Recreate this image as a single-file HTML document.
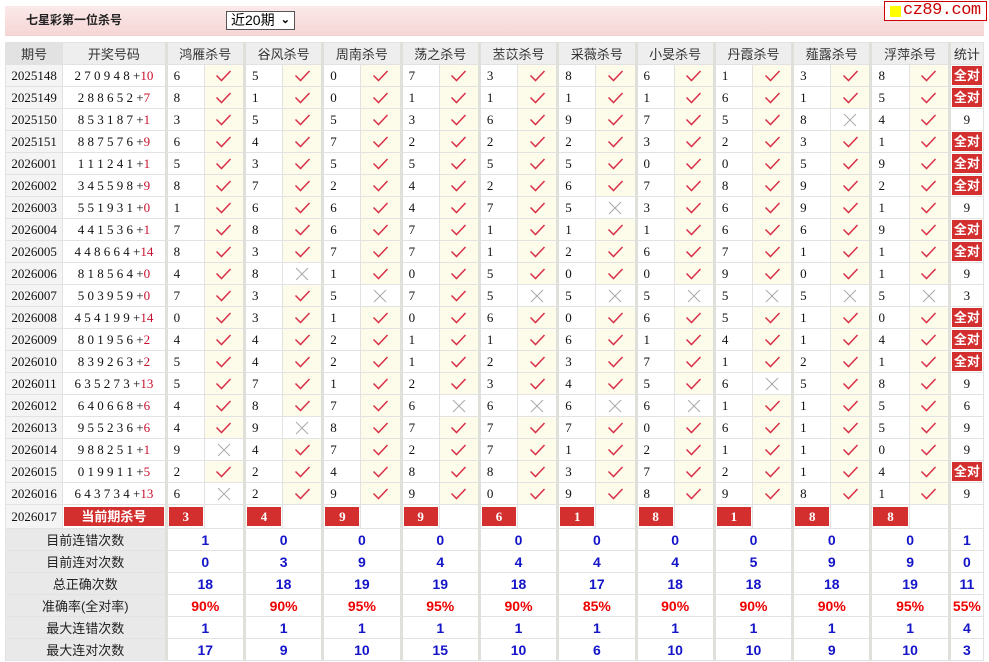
<!DOCTYPE html>
<html><head><meta charset="utf-8"><style>
body{margin:0;width:989px;height:662px;background:#fff;position:relative;overflow:hidden;font-family:"Liberation Serif","Noto Serif CJK SC",serif}
.bar{position:absolute;left:5px;top:6px;width:979px;height:29px;background:linear-gradient(#fbe9e9,#f6d6d6);border-bottom:1px solid #f0d0d0}
.ttl{position:absolute;left:26px;top:11px;font:bold 12px "Liberation Sans","Noto Sans CJK SC",sans-serif;color:#222}
.sel{position:absolute;left:226px;top:11px;width:69px;height:19px;border:1px solid #555;background:#fff;font:14px "Liberation Sans","Noto Sans CJK SC",sans-serif;line-height:17px;padding-left:4px;box-sizing:border-box;color:#000}
.sel b{position:absolute;right:4px;top:0;font-size:11px}
.logo{position:absolute;left:884px;top:1px;width:103px;height:20px;border:1px solid #c00;background:#fff;box-sizing:border-box;overflow:hidden}
.logo i{position:absolute;left:5px;top:4px;width:11px;height:11px;background:#ff0}
.logo span{position:absolute;left:18px;top:0px;font:17px "Liberation Mono",monospace;color:#c00;letter-spacing:-0.5px;line-height:18px}
table{position:absolute;left:5px;top:42px;border-collapse:collapse;table-layout:fixed;width:979px}
td,th{height:21px;border:1px solid #e2e2e2;padding:0;font-size:13px;color:#111;white-space:nowrap;overflow:hidden}
th{font:normal 13px "Liberation Sans","Noto Sans CJK SC",sans-serif;background:#eeeeee;color:#333}
th.h0{background:#e2e2e2}
.g{border-left:3px solid #e0e0da}
td.q{text-align:center;background:#f4f4f4;font-size:13px}
td.d{text-align:center;background:#fff}
td.d i{font-style:normal;color:#c8102e}
td.n{padding-left:6px;background:#fff}
td.y{background:#fdfbea;text-align:center}
td.x{background:#fff;text-align:center}
td svg{display:block;margin:0 auto}
td.s{text-align:center;background:#fff}
td.a{text-align:center;background:#fff}
td.a span{display:block;margin:1px 1px;height:19px;background:#d32f2f;color:#fff;font:bold 13px "Liberation Sans","Noto Sans CJK SC",sans-serif;line-height:19px}
td.k{background:#fff;padding:1px}
td.k span{display:block;height:19px;background:#d32f2f;color:#fff;font-weight:bold;text-align:center;line-height:19px}
td.cur{background:#fff;padding:1px}
td.cur span{display:block;height:19px;background:#d32f2f;color:#fff;font:bold 13px "Liberation Sans","Noto Sans CJK SC",sans-serif;text-align:center;line-height:19px}
td.L{text-align:center;background:#e9e9e9;font:13px "Liberation Sans","Noto Sans CJK SC",sans-serif;color:#222}
td.v{text-align:center;background:#fff;font:bold 14px "Liberation Sans",sans-serif;color:#1414c8}
td.p{text-align:center;background:#fff;font:bold 14px "Liberation Sans",sans-serif;color:#e00}
</style></head><body>
<svg width="0" height="0" style="position:absolute"><defs>
<g id="c"><path d="M2.5 7.5 L7.5 12.5 L16.5 3" stroke="#d9304a" stroke-width="1.5" fill="none"/></g>
<g id="x"><path d="M2 2 L14 14 M14 2 L2 14" stroke="#aaa" stroke-width="1" fill="none"/></g>
</defs></svg>
<div class="bar"></div>
<div class="ttl">七星彩第一位杀号</div>
<div class="sel">近20期<b>&#8964;</b></div>
<div class="logo"><i></i><span>cz89.com</span></div>
<table>
<colgroup><col style="width:57px"><col style="width:103px">
<col style="width:38px"><col style="width:40px"><col style="width:38px"><col style="width:40px"><col style="width:38px"><col style="width:40px"><col style="width:38px"><col style="width:40px"><col style="width:38px"><col style="width:40px"><col style="width:38px"><col style="width:40px"><col style="width:38px"><col style="width:40px"><col style="width:38px"><col style="width:40px"><col style="width:38px"><col style="width:40px"><col style="width:38px"><col style="width:40px">
<col style="width:34px"></colgroup>
<tr><th class="h0">期号</th><th>开奖号码</th><th colspan="2" class="g">鸿雁杀号</th><th colspan="2" class="g">谷风杀号</th><th colspan="2" class="g">周南杀号</th><th colspan="2" class="g">荡之杀号</th><th colspan="2" class="g">苤苡杀号</th><th colspan="2" class="g">采薇杀号</th><th colspan="2" class="g">小旻杀号</th><th colspan="2" class="g">丹霞杀号</th><th colspan="2" class="g">薤露杀号</th><th colspan="2" class="g">浮萍杀号</th><th class="g">统计</th></tr>

<tr><td class="q">2025148</td><td class="d">2 7 0 9 4 8 +<i>10</i></td><td class="n g">6</td><td class="y"><svg width="19" height="15"><use href="#c"/></svg></td><td class="n g">5</td><td class="y"><svg width="19" height="15"><use href="#c"/></svg></td><td class="n g">0</td><td class="y"><svg width="19" height="15"><use href="#c"/></svg></td><td class="n g">7</td><td class="y"><svg width="19" height="15"><use href="#c"/></svg></td><td class="n g">3</td><td class="y"><svg width="19" height="15"><use href="#c"/></svg></td><td class="n g">8</td><td class="y"><svg width="19" height="15"><use href="#c"/></svg></td><td class="n g">6</td><td class="y"><svg width="19" height="15"><use href="#c"/></svg></td><td class="n g">1</td><td class="y"><svg width="19" height="15"><use href="#c"/></svg></td><td class="n g">3</td><td class="y"><svg width="19" height="15"><use href="#c"/></svg></td><td class="n g">8</td><td class="y"><svg width="19" height="15"><use href="#c"/></svg></td><td class="a g"><span>全对</span></td></tr>

<tr><td class="q">2025149</td><td class="d">2 8 8 6 5 2 +<i>7</i></td><td class="n g">8</td><td class="y"><svg width="19" height="15"><use href="#c"/></svg></td><td class="n g">1</td><td class="y"><svg width="19" height="15"><use href="#c"/></svg></td><td class="n g">0</td><td class="y"><svg width="19" height="15"><use href="#c"/></svg></td><td class="n g">1</td><td class="y"><svg width="19" height="15"><use href="#c"/></svg></td><td class="n g">1</td><td class="y"><svg width="19" height="15"><use href="#c"/></svg></td><td class="n g">1</td><td class="y"><svg width="19" height="15"><use href="#c"/></svg></td><td class="n g">1</td><td class="y"><svg width="19" height="15"><use href="#c"/></svg></td><td class="n g">6</td><td class="y"><svg width="19" height="15"><use href="#c"/></svg></td><td class="n g">1</td><td class="y"><svg width="19" height="15"><use href="#c"/></svg></td><td class="n g">5</td><td class="y"><svg width="19" height="15"><use href="#c"/></svg></td><td class="a g"><span>全对</span></td></tr>

<tr><td class="q">2025150</td><td class="d">8 5 3 1 8 7 +<i>1</i></td><td class="n g">3</td><td class="y"><svg width="19" height="15"><use href="#c"/></svg></td><td class="n g">5</td><td class="y"><svg width="19" height="15"><use href="#c"/></svg></td><td class="n g">5</td><td class="y"><svg width="19" height="15"><use href="#c"/></svg></td><td class="n g">3</td><td class="y"><svg width="19" height="15"><use href="#c"/></svg></td><td class="n g">6</td><td class="y"><svg width="19" height="15"><use href="#c"/></svg></td><td class="n g">9</td><td class="y"><svg width="19" height="15"><use href="#c"/></svg></td><td class="n g">7</td><td class="y"><svg width="19" height="15"><use href="#c"/></svg></td><td class="n g">5</td><td class="y"><svg width="19" height="15"><use href="#c"/></svg></td><td class="n g">8</td><td class="x"><svg width="16" height="16"><use href="#x"/></svg></td><td class="n g">4</td><td class="y"><svg width="19" height="15"><use href="#c"/></svg></td><td class="s g">9</td></tr>

<tr><td class="q">2025151</td><td class="d">8 8 7 5 7 6 +<i>9</i></td><td class="n g">6</td><td class="y"><svg width="19" height="15"><use href="#c"/></svg></td><td class="n g">4</td><td class="y"><svg width="19" height="15"><use href="#c"/></svg></td><td class="n g">7</td><td class="y"><svg width="19" height="15"><use href="#c"/></svg></td><td class="n g">2</td><td class="y"><svg width="19" height="15"><use href="#c"/></svg></td><td class="n g">2</td><td class="y"><svg width="19" height="15"><use href="#c"/></svg></td><td class="n g">2</td><td class="y"><svg width="19" height="15"><use href="#c"/></svg></td><td class="n g">3</td><td class="y"><svg width="19" height="15"><use href="#c"/></svg></td><td class="n g">2</td><td class="y"><svg width="19" height="15"><use href="#c"/></svg></td><td class="n g">3</td><td class="y"><svg width="19" height="15"><use href="#c"/></svg></td><td class="n g">1</td><td class="y"><svg width="19" height="15"><use href="#c"/></svg></td><td class="a g"><span>全对</span></td></tr>

<tr><td class="q">2026001</td><td class="d">1 1 1 2 4 1 +<i>1</i></td><td class="n g">5</td><td class="y"><svg width="19" height="15"><use href="#c"/></svg></td><td class="n g">3</td><td class="y"><svg width="19" height="15"><use href="#c"/></svg></td><td class="n g">5</td><td class="y"><svg width="19" height="15"><use href="#c"/></svg></td><td class="n g">5</td><td class="y"><svg width="19" height="15"><use href="#c"/></svg></td><td class="n g">5</td><td class="y"><svg width="19" height="15"><use href="#c"/></svg></td><td class="n g">5</td><td class="y"><svg width="19" height="15"><use href="#c"/></svg></td><td class="n g">0</td><td class="y"><svg width="19" height="15"><use href="#c"/></svg></td><td class="n g">0</td><td class="y"><svg width="19" height="15"><use href="#c"/></svg></td><td class="n g">5</td><td class="y"><svg width="19" height="15"><use href="#c"/></svg></td><td class="n g">9</td><td class="y"><svg width="19" height="15"><use href="#c"/></svg></td><td class="a g"><span>全对</span></td></tr>

<tr><td class="q">2026002</td><td class="d">3 4 5 5 9 8 +<i>9</i></td><td class="n g">8</td><td class="y"><svg width="19" height="15"><use href="#c"/></svg></td><td class="n g">7</td><td class="y"><svg width="19" height="15"><use href="#c"/></svg></td><td class="n g">2</td><td class="y"><svg width="19" height="15"><use href="#c"/></svg></td><td class="n g">4</td><td class="y"><svg width="19" height="15"><use href="#c"/></svg></td><td class="n g">2</td><td class="y"><svg width="19" height="15"><use href="#c"/></svg></td><td class="n g">6</td><td class="y"><svg width="19" height="15"><use href="#c"/></svg></td><td class="n g">7</td><td class="y"><svg width="19" height="15"><use href="#c"/></svg></td><td class="n g">8</td><td class="y"><svg width="19" height="15"><use href="#c"/></svg></td><td class="n g">9</td><td class="y"><svg width="19" height="15"><use href="#c"/></svg></td><td class="n g">2</td><td class="y"><svg width="19" height="15"><use href="#c"/></svg></td><td class="a g"><span>全对</span></td></tr>

<tr><td class="q">2026003</td><td class="d">5 5 1 9 3 1 +<i>0</i></td><td class="n g">1</td><td class="y"><svg width="19" height="15"><use href="#c"/></svg></td><td class="n g">6</td><td class="y"><svg width="19" height="15"><use href="#c"/></svg></td><td class="n g">6</td><td class="y"><svg width="19" height="15"><use href="#c"/></svg></td><td class="n g">4</td><td class="y"><svg width="19" height="15"><use href="#c"/></svg></td><td class="n g">7</td><td class="y"><svg width="19" height="15"><use href="#c"/></svg></td><td class="n g">5</td><td class="x"><svg width="16" height="16"><use href="#x"/></svg></td><td class="n g">3</td><td class="y"><svg width="19" height="15"><use href="#c"/></svg></td><td class="n g">6</td><td class="y"><svg width="19" height="15"><use href="#c"/></svg></td><td class="n g">9</td><td class="y"><svg width="19" height="15"><use href="#c"/></svg></td><td class="n g">1</td><td class="y"><svg width="19" height="15"><use href="#c"/></svg></td><td class="s g">9</td></tr>

<tr><td class="q">2026004</td><td class="d">4 4 1 5 3 6 +<i>1</i></td><td class="n g">7</td><td class="y"><svg width="19" height="15"><use href="#c"/></svg></td><td class="n g">8</td><td class="y"><svg width="19" height="15"><use href="#c"/></svg></td><td class="n g">6</td><td class="y"><svg width="19" height="15"><use href="#c"/></svg></td><td class="n g">7</td><td class="y"><svg width="19" height="15"><use href="#c"/></svg></td><td class="n g">1</td><td class="y"><svg width="19" height="15"><use href="#c"/></svg></td><td class="n g">1</td><td class="y"><svg width="19" height="15"><use href="#c"/></svg></td><td class="n g">1</td><td class="y"><svg width="19" height="15"><use href="#c"/></svg></td><td class="n g">6</td><td class="y"><svg width="19" height="15"><use href="#c"/></svg></td><td class="n g">6</td><td class="y"><svg width="19" height="15"><use href="#c"/></svg></td><td class="n g">9</td><td class="y"><svg width="19" height="15"><use href="#c"/></svg></td><td class="a g"><span>全对</span></td></tr>

<tr><td class="q">2026005</td><td class="d">4 4 8 6 6 4 +<i>14</i></td><td class="n g">8</td><td class="y"><svg width="19" height="15"><use href="#c"/></svg></td><td class="n g">3</td><td class="y"><svg width="19" height="15"><use href="#c"/></svg></td><td class="n g">7</td><td class="y"><svg width="19" height="15"><use href="#c"/></svg></td><td class="n g">7</td><td class="y"><svg width="19" height="15"><use href="#c"/></svg></td><td class="n g">1</td><td class="y"><svg width="19" height="15"><use href="#c"/></svg></td><td class="n g">2</td><td class="y"><svg width="19" height="15"><use href="#c"/></svg></td><td class="n g">6</td><td class="y"><svg width="19" height="15"><use href="#c"/></svg></td><td class="n g">7</td><td class="y"><svg width="19" height="15"><use href="#c"/></svg></td><td class="n g">1</td><td class="y"><svg width="19" height="15"><use href="#c"/></svg></td><td class="n g">1</td><td class="y"><svg width="19" height="15"><use href="#c"/></svg></td><td class="a g"><span>全对</span></td></tr>

<tr><td class="q">2026006</td><td class="d">8 1 8 5 6 4 +<i>0</i></td><td class="n g">4</td><td class="y"><svg width="19" height="15"><use href="#c"/></svg></td><td class="n g">8</td><td class="x"><svg width="16" height="16"><use href="#x"/></svg></td><td class="n g">1</td><td class="y"><svg width="19" height="15"><use href="#c"/></svg></td><td class="n g">0</td><td class="y"><svg width="19" height="15"><use href="#c"/></svg></td><td class="n g">5</td><td class="y"><svg width="19" height="15"><use href="#c"/></svg></td><td class="n g">0</td><td class="y"><svg width="19" height="15"><use href="#c"/></svg></td><td class="n g">0</td><td class="y"><svg width="19" height="15"><use href="#c"/></svg></td><td class="n g">9</td><td class="y"><svg width="19" height="15"><use href="#c"/></svg></td><td class="n g">0</td><td class="y"><svg width="19" height="15"><use href="#c"/></svg></td><td class="n g">1</td><td class="y"><svg width="19" height="15"><use href="#c"/></svg></td><td class="s g">9</td></tr>

<tr><td class="q">2026007</td><td class="d">5 0 3 9 5 9 +<i>0</i></td><td class="n g">7</td><td class="y"><svg width="19" height="15"><use href="#c"/></svg></td><td class="n g">3</td><td class="y"><svg width="19" height="15"><use href="#c"/></svg></td><td class="n g">5</td><td class="x"><svg width="16" height="16"><use href="#x"/></svg></td><td class="n g">7</td><td class="y"><svg width="19" height="15"><use href="#c"/></svg></td><td class="n g">5</td><td class="x"><svg width="16" height="16"><use href="#x"/></svg></td><td class="n g">5</td><td class="x"><svg width="16" height="16"><use href="#x"/></svg></td><td class="n g">5</td><td class="x"><svg width="16" height="16"><use href="#x"/></svg></td><td class="n g">5</td><td class="x"><svg width="16" height="16"><use href="#x"/></svg></td><td class="n g">5</td><td class="x"><svg width="16" height="16"><use href="#x"/></svg></td><td class="n g">5</td><td class="x"><svg width="16" height="16"><use href="#x"/></svg></td><td class="s g">3</td></tr>

<tr><td class="q">2026008</td><td class="d">4 5 4 1 9 9 +<i>14</i></td><td class="n g">0</td><td class="y"><svg width="19" height="15"><use href="#c"/></svg></td><td class="n g">3</td><td class="y"><svg width="19" height="15"><use href="#c"/></svg></td><td class="n g">1</td><td class="y"><svg width="19" height="15"><use href="#c"/></svg></td><td class="n g">0</td><td class="y"><svg width="19" height="15"><use href="#c"/></svg></td><td class="n g">6</td><td class="y"><svg width="19" height="15"><use href="#c"/></svg></td><td class="n g">0</td><td class="y"><svg width="19" height="15"><use href="#c"/></svg></td><td class="n g">6</td><td class="y"><svg width="19" height="15"><use href="#c"/></svg></td><td class="n g">5</td><td class="y"><svg width="19" height="15"><use href="#c"/></svg></td><td class="n g">1</td><td class="y"><svg width="19" height="15"><use href="#c"/></svg></td><td class="n g">0</td><td class="y"><svg width="19" height="15"><use href="#c"/></svg></td><td class="a g"><span>全对</span></td></tr>

<tr><td class="q">2026009</td><td class="d">8 0 1 9 5 6 +<i>2</i></td><td class="n g">4</td><td class="y"><svg width="19" height="15"><use href="#c"/></svg></td><td class="n g">4</td><td class="y"><svg width="19" height="15"><use href="#c"/></svg></td><td class="n g">2</td><td class="y"><svg width="19" height="15"><use href="#c"/></svg></td><td class="n g">1</td><td class="y"><svg width="19" height="15"><use href="#c"/></svg></td><td class="n g">1</td><td class="y"><svg width="19" height="15"><use href="#c"/></svg></td><td class="n g">6</td><td class="y"><svg width="19" height="15"><use href="#c"/></svg></td><td class="n g">1</td><td class="y"><svg width="19" height="15"><use href="#c"/></svg></td><td class="n g">4</td><td class="y"><svg width="19" height="15"><use href="#c"/></svg></td><td class="n g">1</td><td class="y"><svg width="19" height="15"><use href="#c"/></svg></td><td class="n g">4</td><td class="y"><svg width="19" height="15"><use href="#c"/></svg></td><td class="a g"><span>全对</span></td></tr>

<tr><td class="q">2026010</td><td class="d">8 3 9 2 6 3 +<i>2</i></td><td class="n g">5</td><td class="y"><svg width="19" height="15"><use href="#c"/></svg></td><td class="n g">4</td><td class="y"><svg width="19" height="15"><use href="#c"/></svg></td><td class="n g">2</td><td class="y"><svg width="19" height="15"><use href="#c"/></svg></td><td class="n g">1</td><td class="y"><svg width="19" height="15"><use href="#c"/></svg></td><td class="n g">2</td><td class="y"><svg width="19" height="15"><use href="#c"/></svg></td><td class="n g">3</td><td class="y"><svg width="19" height="15"><use href="#c"/></svg></td><td class="n g">7</td><td class="y"><svg width="19" height="15"><use href="#c"/></svg></td><td class="n g">1</td><td class="y"><svg width="19" height="15"><use href="#c"/></svg></td><td class="n g">2</td><td class="y"><svg width="19" height="15"><use href="#c"/></svg></td><td class="n g">1</td><td class="y"><svg width="19" height="15"><use href="#c"/></svg></td><td class="a g"><span>全对</span></td></tr>

<tr><td class="q">2026011</td><td class="d">6 3 5 2 7 3 +<i>13</i></td><td class="n g">5</td><td class="y"><svg width="19" height="15"><use href="#c"/></svg></td><td class="n g">7</td><td class="y"><svg width="19" height="15"><use href="#c"/></svg></td><td class="n g">1</td><td class="y"><svg width="19" height="15"><use href="#c"/></svg></td><td class="n g">2</td><td class="y"><svg width="19" height="15"><use href="#c"/></svg></td><td class="n g">3</td><td class="y"><svg width="19" height="15"><use href="#c"/></svg></td><td class="n g">4</td><td class="y"><svg width="19" height="15"><use href="#c"/></svg></td><td class="n g">5</td><td class="y"><svg width="19" height="15"><use href="#c"/></svg></td><td class="n g">6</td><td class="x"><svg width="16" height="16"><use href="#x"/></svg></td><td class="n g">5</td><td class="y"><svg width="19" height="15"><use href="#c"/></svg></td><td class="n g">8</td><td class="y"><svg width="19" height="15"><use href="#c"/></svg></td><td class="s g">9</td></tr>

<tr><td class="q">2026012</td><td class="d">6 4 0 6 6 8 +<i>6</i></td><td class="n g">4</td><td class="y"><svg width="19" height="15"><use href="#c"/></svg></td><td class="n g">8</td><td class="y"><svg width="19" height="15"><use href="#c"/></svg></td><td class="n g">7</td><td class="y"><svg width="19" height="15"><use href="#c"/></svg></td><td class="n g">6</td><td class="x"><svg width="16" height="16"><use href="#x"/></svg></td><td class="n g">6</td><td class="x"><svg width="16" height="16"><use href="#x"/></svg></td><td class="n g">6</td><td class="x"><svg width="16" height="16"><use href="#x"/></svg></td><td class="n g">6</td><td class="x"><svg width="16" height="16"><use href="#x"/></svg></td><td class="n g">1</td><td class="y"><svg width="19" height="15"><use href="#c"/></svg></td><td class="n g">1</td><td class="y"><svg width="19" height="15"><use href="#c"/></svg></td><td class="n g">5</td><td class="y"><svg width="19" height="15"><use href="#c"/></svg></td><td class="s g">6</td></tr>

<tr><td class="q">2026013</td><td class="d">9 5 5 2 3 6 +<i>6</i></td><td class="n g">4</td><td class="y"><svg width="19" height="15"><use href="#c"/></svg></td><td class="n g">9</td><td class="x"><svg width="16" height="16"><use href="#x"/></svg></td><td class="n g">8</td><td class="y"><svg width="19" height="15"><use href="#c"/></svg></td><td class="n g">7</td><td class="y"><svg width="19" height="15"><use href="#c"/></svg></td><td class="n g">7</td><td class="y"><svg width="19" height="15"><use href="#c"/></svg></td><td class="n g">7</td><td class="y"><svg width="19" height="15"><use href="#c"/></svg></td><td class="n g">0</td><td class="y"><svg width="19" height="15"><use href="#c"/></svg></td><td class="n g">6</td><td class="y"><svg width="19" height="15"><use href="#c"/></svg></td><td class="n g">1</td><td class="y"><svg width="19" height="15"><use href="#c"/></svg></td><td class="n g">5</td><td class="y"><svg width="19" height="15"><use href="#c"/></svg></td><td class="s g">9</td></tr>

<tr><td class="q">2026014</td><td class="d">9 8 8 2 5 1 +<i>1</i></td><td class="n g">9</td><td class="x"><svg width="16" height="16"><use href="#x"/></svg></td><td class="n g">4</td><td class="y"><svg width="19" height="15"><use href="#c"/></svg></td><td class="n g">7</td><td class="y"><svg width="19" height="15"><use href="#c"/></svg></td><td class="n g">2</td><td class="y"><svg width="19" height="15"><use href="#c"/></svg></td><td class="n g">7</td><td class="y"><svg width="19" height="15"><use href="#c"/></svg></td><td class="n g">1</td><td class="y"><svg width="19" height="15"><use href="#c"/></svg></td><td class="n g">2</td><td class="y"><svg width="19" height="15"><use href="#c"/></svg></td><td class="n g">1</td><td class="y"><svg width="19" height="15"><use href="#c"/></svg></td><td class="n g">1</td><td class="y"><svg width="19" height="15"><use href="#c"/></svg></td><td class="n g">0</td><td class="y"><svg width="19" height="15"><use href="#c"/></svg></td><td class="s g">9</td></tr>

<tr><td class="q">2026015</td><td class="d">0 1 9 9 1 1 +<i>5</i></td><td class="n g">2</td><td class="y"><svg width="19" height="15"><use href="#c"/></svg></td><td class="n g">2</td><td class="y"><svg width="19" height="15"><use href="#c"/></svg></td><td class="n g">4</td><td class="y"><svg width="19" height="15"><use href="#c"/></svg></td><td class="n g">8</td><td class="y"><svg width="19" height="15"><use href="#c"/></svg></td><td class="n g">8</td><td class="y"><svg width="19" height="15"><use href="#c"/></svg></td><td class="n g">3</td><td class="y"><svg width="19" height="15"><use href="#c"/></svg></td><td class="n g">7</td><td class="y"><svg width="19" height="15"><use href="#c"/></svg></td><td class="n g">2</td><td class="y"><svg width="19" height="15"><use href="#c"/></svg></td><td class="n g">1</td><td class="y"><svg width="19" height="15"><use href="#c"/></svg></td><td class="n g">4</td><td class="y"><svg width="19" height="15"><use href="#c"/></svg></td><td class="a g"><span>全对</span></td></tr>

<tr><td class="q">2026016</td><td class="d">6 4 3 7 3 4 +<i>13</i></td><td class="n g">6</td><td class="x"><svg width="16" height="16"><use href="#x"/></svg></td><td class="n g">2</td><td class="y"><svg width="19" height="15"><use href="#c"/></svg></td><td class="n g">9</td><td class="y"><svg width="19" height="15"><use href="#c"/></svg></td><td class="n g">9</td><td class="y"><svg width="19" height="15"><use href="#c"/></svg></td><td class="n g">0</td><td class="y"><svg width="19" height="15"><use href="#c"/></svg></td><td class="n g">9</td><td class="y"><svg width="19" height="15"><use href="#c"/></svg></td><td class="n g">8</td><td class="y"><svg width="19" height="15"><use href="#c"/></svg></td><td class="n g">9</td><td class="y"><svg width="19" height="15"><use href="#c"/></svg></td><td class="n g">8</td><td class="y"><svg width="19" height="15"><use href="#c"/></svg></td><td class="n g">1</td><td class="y"><svg width="19" height="15"><use href="#c"/></svg></td><td class="s g">9</td></tr>

<tr><td class="q">2026017</td><td class="cur"><span>当前期杀号</span></td><td class="k g"><span>3</span></td><td class="s"></td><td class="k g"><span>4</span></td><td class="s"></td><td class="k g"><span>9</span></td><td class="s"></td><td class="k g"><span>9</span></td><td class="s"></td><td class="k g"><span>6</span></td><td class="s"></td><td class="k g"><span>1</span></td><td class="s"></td><td class="k g"><span>8</span></td><td class="s"></td><td class="k g"><span>1</span></td><td class="s"></td><td class="k g"><span>8</span></td><td class="s"></td><td class="k g"><span>8</span></td><td class="s"></td><td class="s g"></td></tr>

<tr><td class="L" colspan="2">目前连错次数</td><td class="v g" colspan="2">1</td><td class="v g" colspan="2">0</td><td class="v g" colspan="2">0</td><td class="v g" colspan="2">0</td><td class="v g" colspan="2">0</td><td class="v g" colspan="2">0</td><td class="v g" colspan="2">0</td><td class="v g" colspan="2">0</td><td class="v g" colspan="2">0</td><td class="v g" colspan="2">0</td><td class="v g">1</td></tr>
<tr><td class="L" colspan="2">目前连对次数</td><td class="v g" colspan="2">0</td><td class="v g" colspan="2">3</td><td class="v g" colspan="2">9</td><td class="v g" colspan="2">4</td><td class="v g" colspan="2">4</td><td class="v g" colspan="2">4</td><td class="v g" colspan="2">4</td><td class="v g" colspan="2">5</td><td class="v g" colspan="2">9</td><td class="v g" colspan="2">9</td><td class="v g">0</td></tr>
<tr><td class="L" colspan="2">总正确次数</td><td class="v g" colspan="2">18</td><td class="v g" colspan="2">18</td><td class="v g" colspan="2">19</td><td class="v g" colspan="2">19</td><td class="v g" colspan="2">18</td><td class="v g" colspan="2">17</td><td class="v g" colspan="2">18</td><td class="v g" colspan="2">18</td><td class="v g" colspan="2">18</td><td class="v g" colspan="2">19</td><td class="v g">11</td></tr>
<tr><td class="L" colspan="2">准确率(全对率)</td><td class="p g" colspan="2">90%</td><td class="p g" colspan="2">90%</td><td class="p g" colspan="2">95%</td><td class="p g" colspan="2">95%</td><td class="p g" colspan="2">90%</td><td class="p g" colspan="2">85%</td><td class="p g" colspan="2">90%</td><td class="p g" colspan="2">90%</td><td class="p g" colspan="2">90%</td><td class="p g" colspan="2">95%</td><td class="p g">55%</td></tr>
<tr><td class="L" colspan="2">最大连错次数</td><td class="v g" colspan="2">1</td><td class="v g" colspan="2">1</td><td class="v g" colspan="2">1</td><td class="v g" colspan="2">1</td><td class="v g" colspan="2">1</td><td class="v g" colspan="2">1</td><td class="v g" colspan="2">1</td><td class="v g" colspan="2">1</td><td class="v g" colspan="2">1</td><td class="v g" colspan="2">1</td><td class="v g">4</td></tr>
<tr><td class="L" colspan="2">最大连对次数</td><td class="v g" colspan="2">17</td><td class="v g" colspan="2">9</td><td class="v g" colspan="2">10</td><td class="v g" colspan="2">15</td><td class="v g" colspan="2">10</td><td class="v g" colspan="2">6</td><td class="v g" colspan="2">10</td><td class="v g" colspan="2">10</td><td class="v g" colspan="2">9</td><td class="v g" colspan="2">10</td><td class="v g">3</td></tr>
</table>
</body></html>
